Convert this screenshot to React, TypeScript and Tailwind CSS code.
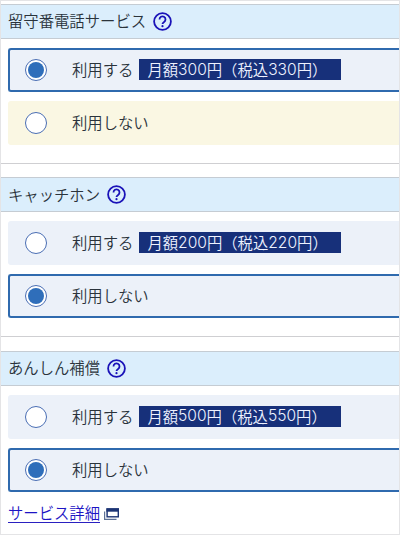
interface ServiceOption {
  label: string;
  price?: [string, string];
  tone: "blue" | "yellow";
}

interface Service {
  title: string;
  options: ServiceOption[];
  selected: number;
}

const services: Service[] = [
  {
    title: "留守番電話サービス",
    options: [
      { label: "利用する", price: ["300", "330"], tone: "blue" },
      { label: "利用しない", tone: "yellow" },
    ],
    selected: 0,
  },
  {
    title: "キャッチホン",
    options: [
      { label: "利用する", price: ["200", "220"], tone: "blue" },
      { label: "利用しない", tone: "blue" },
    ],
    selected: 1,
  },
  {
    title: "あんしん補償",
    options: [
      { label: "利用する", price: ["500", "550"], tone: "blue" },
      { label: "利用しない", tone: "blue" },
    ],
    selected: 1,
  },
];

function HelpIcon() {
  return (
    <svg className="ml-[7px] size-[19px] shrink-0" viewBox="0 0 19 19" fill="none" stroke="#1a12b8">
      <circle cx="9.5" cy="9.5" r="8.4" strokeWidth="1.8" />
      <path d="M6.5 7.4a3 3 0 1 1 4.6 2.5c-1 .7-1.6 1.2-1.6 2.2" strokeWidth="1.8" />
      <circle cx="9.5" cy="14.2" r="1.1" fill="#1a12b8" stroke="none" />
    </svg>
  );
}

function WindowIcon() {
  return (
    <svg className="ml-1 h-3 w-[15px] shrink-0" viewBox="0 0 15 12" fill="none">
      <path d="M.6 3.5v7.8h11.9" stroke="#5d7196" strokeWidth="1.2" />
      <rect x="3.1" y="1" width="11.2" height="7.8" fill="#fff" stroke="#1c3474" strokeWidth="1.4" />
      <path d="M2.4.3H15v3.4H2.4z" fill="#1c3474" />
    </svg>
  );
}

function Radio({ checked }: { checked: boolean }) {
  return (
    <span className="flex size-[22px] shrink-0 items-center justify-center rounded-full border border-[#4a6eb4] bg-white">
      {checked && <span className="size-4 rounded-full bg-[#2f6eba]" />}
    </span>
  );
}

function Price({ price }: { price: [string, string] }) {
  return (
    <span className="mb-px ml-1.5 flex h-[21px] w-[202px] items-center bg-[#17307a] pl-2 whitespace-nowrap text-[#eef2ff]">
      月額<Digits value={price[0]} />円（税込<Digits value={price[1]} />円）
    </span>
  );
}

function Digits({ value }: { value: string }) {
  return <span className="font-['Inter',sans-serif] text-[15.6px] font-light">{value}</span>;
}

function OptionRow({ option, checked }: { option: ServiceOption; checked: boolean }) {
  const tone = option.tone === "yellow" ? "bg-[#faf7e3]" : "bg-[#ecf1f9]";
  const frame = checked ? "border-[#2f6aae]" : "border-transparent";
  return (
    <label className={`flex h-11 items-center rounded-l-[3px] border-2 border-r-0 pl-[15px] ${tone} ${frame}`}>
      <Radio checked={checked} />
      <span className="ml-[25px] pb-px">{option.label}</span>
      {option.price && <Price price={option.price} />}
    </label>
  );
}

export default function App() {
  return (
    <main className="h-[535px] w-[400px] overflow-hidden border border-[#e4e4e6] bg-white pt-[3px] font-['Noto_Sans_CJK_JP',sans-serif] text-[15.35px] leading-none font-[350] text-[#2a333b]">
      {services.map((service, i) => (
        <section key={service.title} className={i > 0 ? "mt-[13.4px]" : ""}>
          <h2 className="flex h-[35px] items-center border-y border-[#c5ccd3] bg-[#dbeefc] pl-[7px] font-[350]">
            <span className="pb-px">{service.title}</span>
            <HelpIcon />
          </h2>
          <div className="mt-[9px] ml-[7px] flex flex-col gap-[9px]">
            {service.options.map((option, n) => (
              <OptionRow key={option.label} option={option} checked={n === service.selected} />
            ))}
          </div>
          {i < services.length - 1 && <hr className="mt-[18px] border-[#cfcfd2]" />}
        </section>
      ))}
      <p className="mt-[13.5px] ml-[7px] flex items-center">
        <a href="#" className="border-b border-[#2a20c0] pb-px text-[#1d14c4]">
          サービス詳細
        </a>
        <WindowIcon />
      </p>
    </main>
  );
}
